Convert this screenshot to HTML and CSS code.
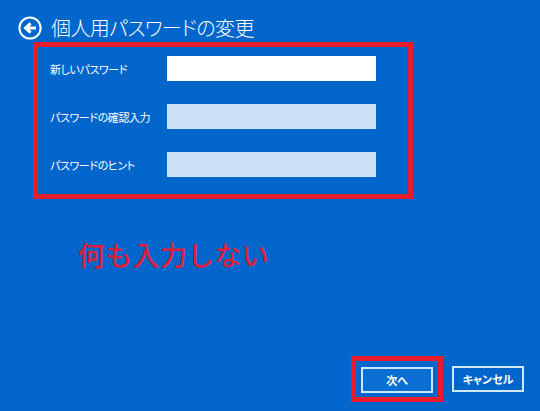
FILE: index.html
```html
<!DOCTYPE html>
<html lang="ja">
<head>
<meta charset="utf-8">
<title>個人用パスワードの変更</title>
<link rel="stylesheet" href="styles.css">
</head>
<body>
<main class="page">
  <header class="header">
    <svg class="back" viewBox="0 0 24 24" width="24" height="24" aria-hidden="true">
      <circle cx="12" cy="12" r="10.6" fill="none" stroke="#fff" stroke-width="2"/>
      <path d="M18 12H9M12.6 7.4L7.6 12l5 4.6" fill="none" stroke="#fff" stroke-width="3"/>
    </svg>
    <h1 class="title">個人用パスワードの変更</h1>
  </header>
  <section class="form">
    <div class="row"><label class="label">新しいパスワード</label><div class="field active"></div></div>
    <div class="row"><label class="label">パスワードの確認入力</label><div class="field"></div></div>
    <div class="row"><label class="label">パスワードのヒント</label><div class="field"></div></div>
  </section>
  <p class="note">何も入力しない</p>
  <footer class="footer">
    <div class="highlight"><button class="btn primary">次へ</button></div>
    <button class="btn">キャンセル</button>
  </footer>
</main>
</body>
</html>
```
FILE: styles.css
```css
* { box-sizing: border-box; }
html, body { margin: 0; padding: 0; }
body {
  width: 540px;
  height: 411px;
  overflow: hidden;
  background: #0066cc;
  color: #fff;
  font-family: "Noto Sans CJK JP", "Noto Sans", sans-serif;
  font-feature-settings: "palt";
}
.page {
  height: 411px;
  display: flex;
  flex-direction: column;
  padding: 16px 16px 9px 18px;
}
.header {
  display: flex;
  align-items: center;
  gap: 9px;
  height: 24px;
  margin-bottom: 2px;
}
.back { flex: none; }
.title {
  margin: 0;
  font-size: 20px;
  font-weight: 300;
  line-height: 24px;
  letter-spacing: -0.6px;
  white-space: nowrap;
}
.form {
  width: 380px;
  height: 157px;
  margin-left: 15px;
  padding: 9px 32px 17px 12px;
  border: 5px solid #e81c2a;
  display: flex;
  flex-direction: column;
  gap: 23px;
}
.row {
  display: flex;
  align-items: center;
  height: 25px;
}
.label {
  width: 117px;
  flex: none;
  font-size: 11px;
  line-height: 14px;
  letter-spacing: -0.4px;
  white-space: nowrap;
}
.field {
  flex: 1;
  height: 25px;
  background: #cce0f5;
}
.field.active { background: #fff; }
.note {
  margin: 38px 0 0 60px;
  font-size: 27px;
  line-height: 36px;
  font-weight: 500;
  color: #dc1f3c;
  letter-spacing: 0.3px;
  font-feature-settings: normal;
}
.footer {
  margin-top: auto;
  display: flex;
  align-items: center;
  justify-content: flex-end;
  gap: 9px;
}
.highlight {
  width: 92px;
  height: 46px;
  padding: 6px 5px;
  border: 5px solid #e81c2a;
  display: flex;
  justify-content: center;
}
.btn {
  width: 72px;
  height: 26px;
  padding: 0;
  border: 2px solid #cfe8fb;
  background: #0066cc;
  color: #fff;
  font: 700 11px/1 "Noto Sans CJK JP", sans-serif;
  font-feature-settings: "palt";
}
.btn.primary { width: 73px; background: #0a6fd2; }
```
